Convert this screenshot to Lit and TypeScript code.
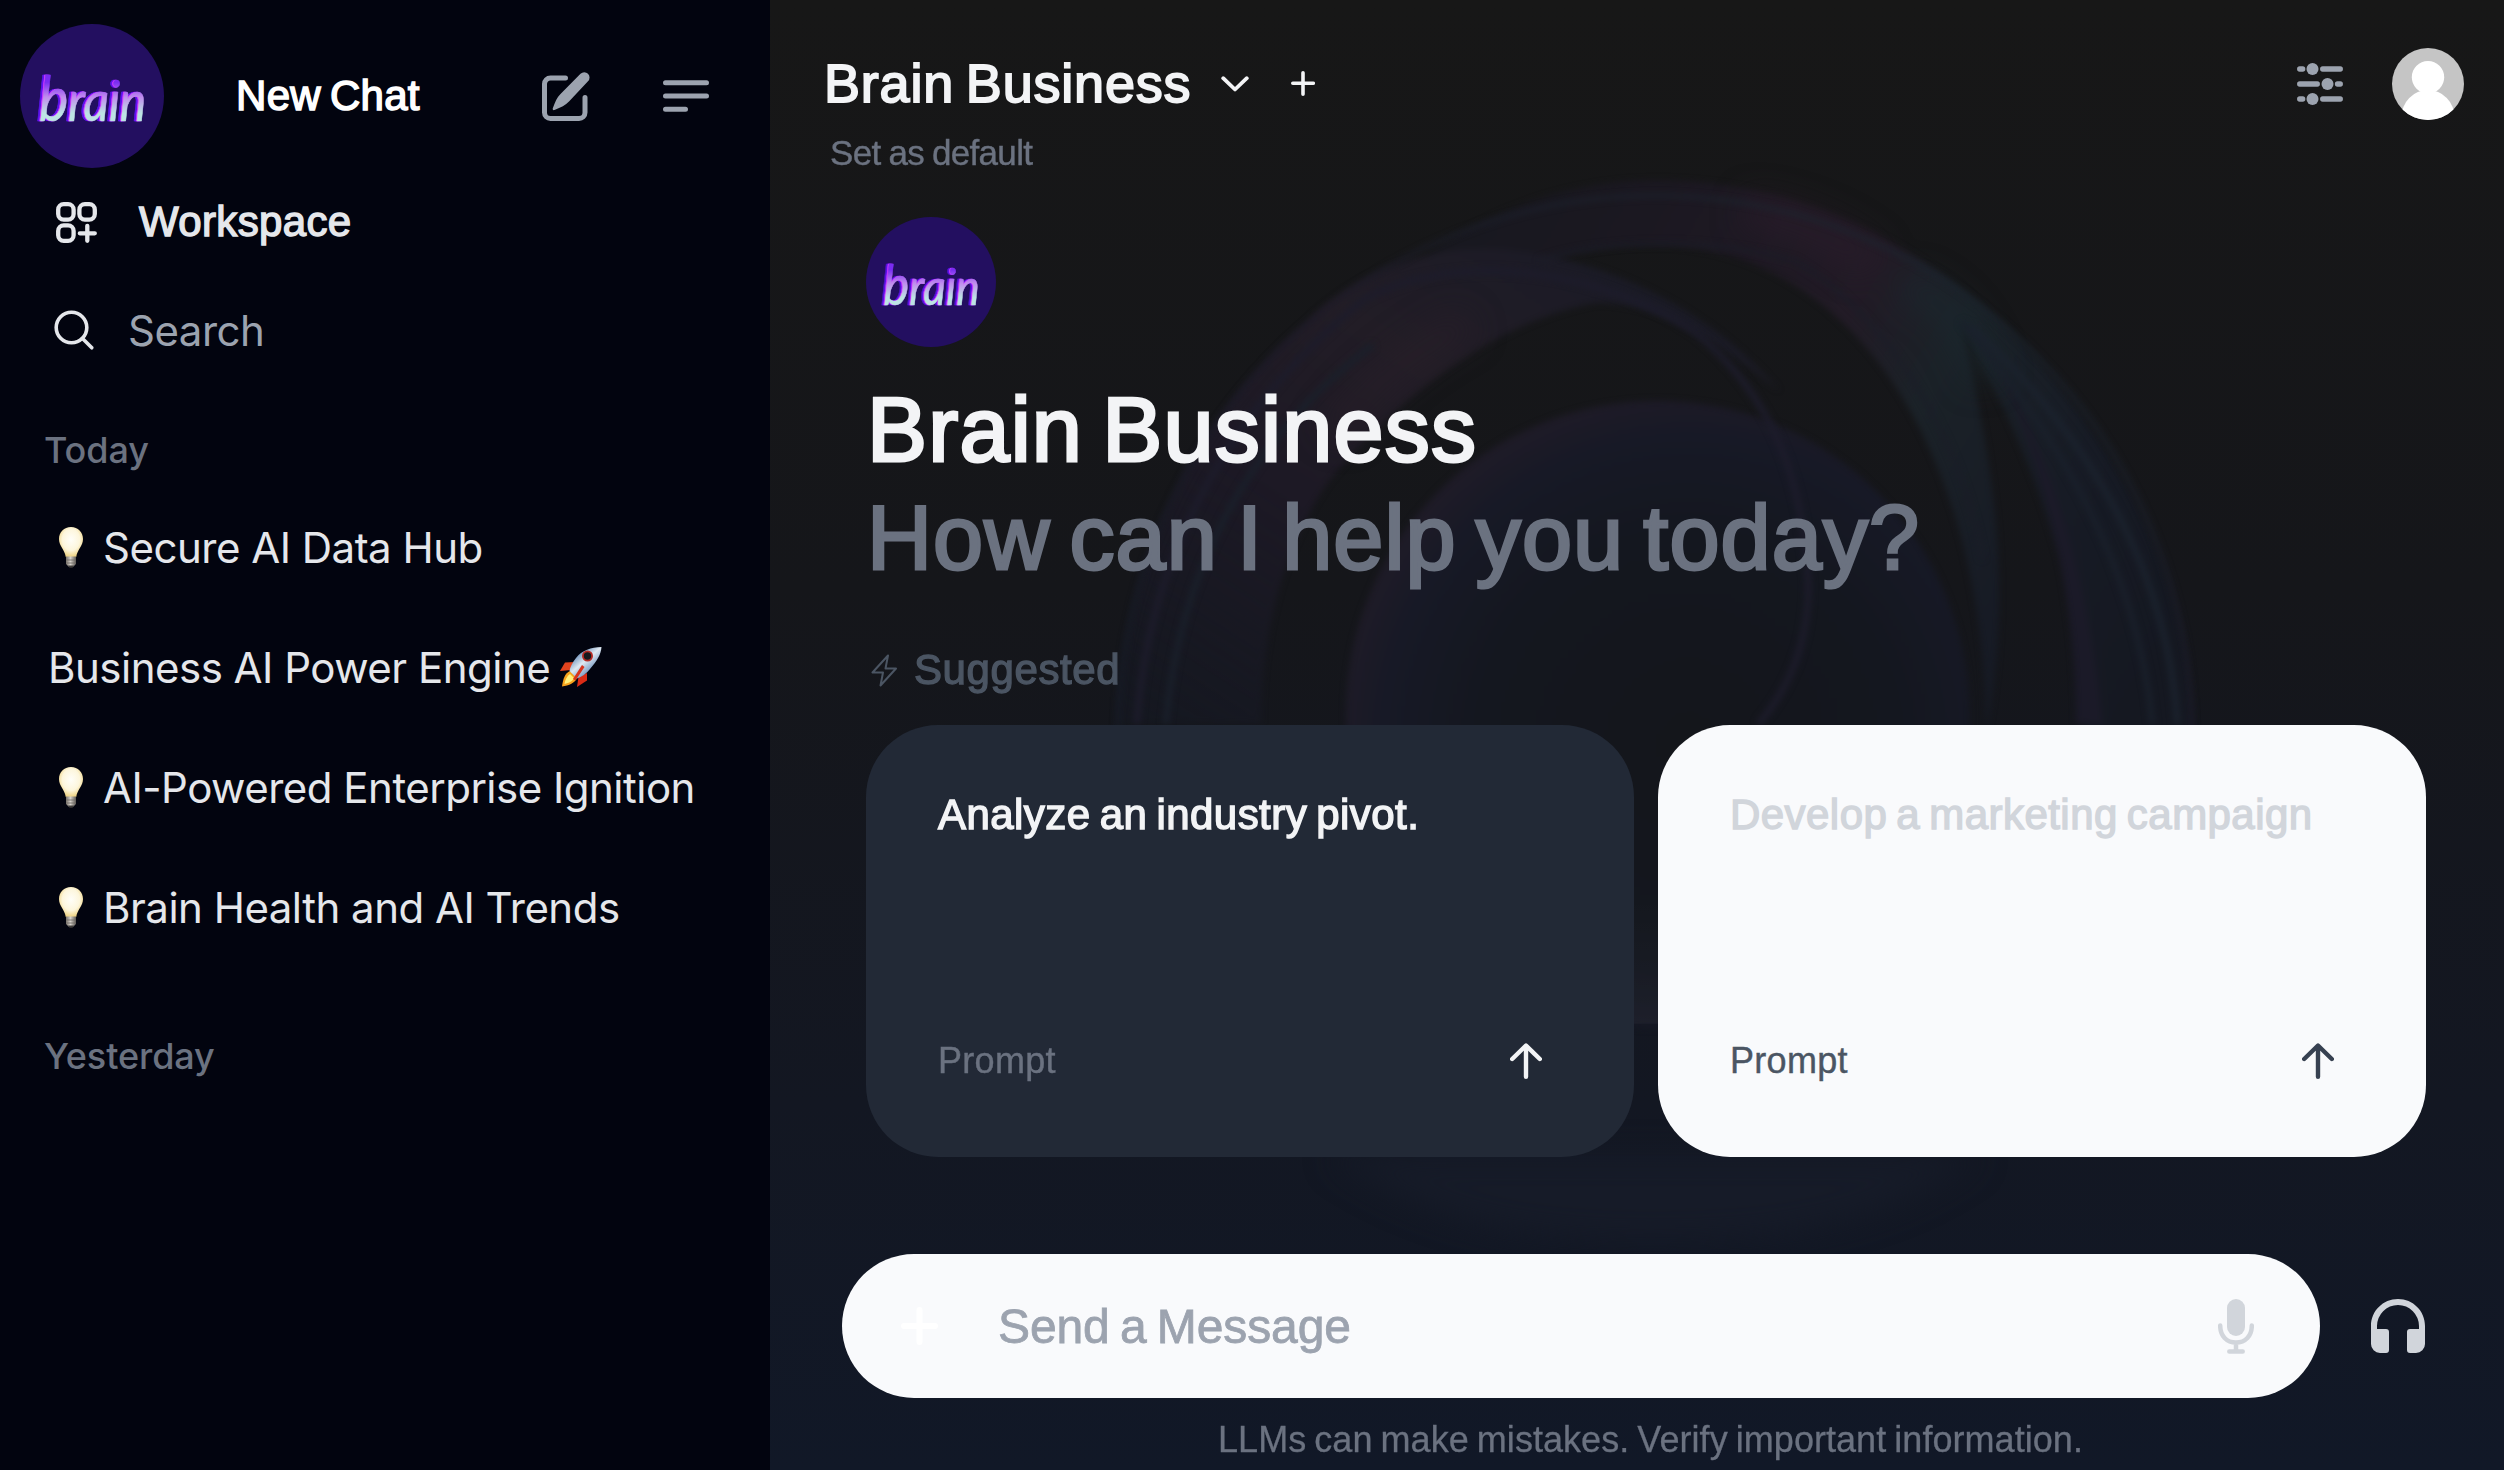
import { LitElement, html, css, svg } from 'lit';
import { customElement, property } from 'lit/decorators.js';

const bulb = html`
  <svg class="bulb" viewBox="0 0 24 41">
    <defs>
      <radialGradient id="glass" cx=".5" cy=".42" r=".6">
        <stop offset="0" stop-color="#fffef8" />
        <stop offset=".6" stop-color="#fdf6dc" />
        <stop offset="1" stop-color="#edcf78" />
      </radialGradient>
      <linearGradient id="screw" x1="0" x2="1">
        <stop offset="0" stop-color="#77716a" />
        <stop offset=".45" stop-color="#d5d1ca" />
        <stop offset="1" stop-color="#5c5853" />
      </linearGradient>
    </defs>
    <path d="M12 0C5 0 0 5.200 0 12c0 7 5.600 10.500 6.800 18h10.400C18.400 22.500 24 19 24 12 24 5.200 19 0 12 0z" fill="url(#glass)" />
    <path d="M7 29.500h10v7.500l-2.500 2.500h-5L7 37z" fill="url(#screw)" />
    <path d="M7.500 33h9M7.500 36h9" stroke="#6c6862" stroke-width=".8" />
    <path d="M9 38.500h6l-1.500 2.200h-3z" fill="#3c3a38" />
  </svg>
`;

const rocket = html`
  <svg class="rocket" viewBox="0 0 42 40">
    <defs>
      <linearGradient id="hull" x1=".2" y1=".2" x2=".8" y2=".9">
        <stop offset="0" stop-color="#5f86b4" />
        <stop offset=".4" stop-color="#dfe9f2" />
        <stop offset="1" stop-color="#3f6ea8" />
      </linearGradient>
    </defs>
    <path d="M15 15L5 15.500 0 24l11-1z" fill="#e2431e" />
    <path d="M27 26v7.500L17 40l1.500-10z" fill="#d92b16" />
    <path d="M10 24C5 26 3 32 2 39.500 9 38.500 15 36 17 31z" fill="#f6a21c" />
    <path d="M10 27c-3 2-5 6-5.500 10C9 36 13 34 14 31z" fill="#fff07a" />
    <path d="M41.500 0C31 0 22 3.500 16 11 12.500 15.500 10 20 9.500 24l7.500 7.500c4.500-1.500 9.500-5 13-9.500C37 14 41 7.500 41.500 0z" fill="url(#hull)" />
    <circle cx="27.500" cy="9" r="4.600" fill="#16181d" stroke="#b52a24" stroke-width="1.800" />
    <path d="M22 18L13 32l2.500 1.500L24.500 20z" fill="#d8341d" />
  </svg>
`;

@customElement('brain-logo')
export class BrainLogo extends LitElement {
  @property({ type: Number }) size = 144;

  static styles = css`
    :host {
      display: block;
      flex: none;
    }

    svg {
      display: block;
    }

    text {
      font: italic 400 56px Lato, sans-serif;
      stroke-linejoin: round;
      filter: drop-shadow(-1px 0 0 #d63bff) drop-shadow(-1.2px 0 0 #5d12ee);
    }

    .initial {
      font-size: 62px;
    }
  `;

  render() {
    return html`
      <svg width=${this.size} height=${this.size} viewBox="0 0 144 144">
        <defs>
          <linearGradient id="neon" x1="0" y1="0" x2="0" y2="1">
            <stop offset=".3" stop-color="#7a2cf2" />
            <stop offset=".5" stop-color="#c08bee" />
            <stop offset=".72" stop-color="#bde4e4" />
          </linearGradient>
        </defs>
        <circle cx="72" cy="72" r="72" fill="#230f60" />
        <text x="19" y="97" textLength="107" lengthAdjust="spacingAndGlyphs" fill="url(#neon)" stroke="url(#neon)" stroke-width=".6"><tspan class="initial">b</tspan>rain</text>
      </svg>
    `;
  }
}

@customElement('chat-sidebar')
export class ChatSidebar extends LitElement {
  static styles = css`
    :host {
      display: block;
      width: 770px;
      flex: none;
      background: #02040f;
      font-family: Inter, sans-serif;
      font-size: 42px;
      letter-spacing: -0.5px;
      color: #e5e7eb;
      white-space: nowrap;
    }

    svg {
      display: block;
      flex: none;
      overflow: visible;
    }

    .top {
      display: flex;
      align-items: center;
      padding: 24px 61px 0 20px;
      height: 144px;
      color: #9ca3af;
    }

    .new {
      flex: 1;
      padding-left: 72px;
      font-family: 'Liberation Sans', sans-serif;
      letter-spacing: 0.3px;
      word-spacing: -3px;
      color: #fff;
      -webkit-text-stroke: 1.5px #fff;
    }

    .menu {
      margin-left: 73px;
    }

    .row {
      display: flex;
      align-items: center;
      height: 108px;
    }

    .workspace {
      padding-left: 56px;
      gap: 42px;
      font-family: 'Liberation Sans', sans-serif;
      letter-spacing: 0.35px;
    }

    .workspace span {
      -webkit-text-stroke: 1.4px currentColor;
    }

    .search {
      padding-left: 54px;
      gap: 34px;
    }

    .search span {
      color: #9ca3af;
    }

    .label {
      padding: 30px 0 1px 44px;
      font-size: 36px;
      font-weight: 500;
      line-height: 72px;
      letter-spacing: -0.1px;
      color: #6b7280;
    }

    .label.later {
      padding-top: 53px;
    }

    .chat {
      display: flex;
      align-items: center;
      height: 120px;
      padding-left: 48px;
    }

    .bulb {
      width: 24px;
      height: 41px;
      margin: 0 20px 0 11px;
    }

    .rocket {
      width: 42px;
      height: 40px;
      margin-left: 10px;
    }
  `;

  render() {
    return html`
      <div class="top">
        <brain-logo></brain-logo>
        <span class="new">New Chat</span>
        <svg width="48" height="49" viewBox="0 0 48 49" fill="none" stroke="currentColor" stroke-width="5" stroke-linecap="round">
          <path d="M23.500 6H8.500A6 6 0 0 0 2.500 12v28.500a6 6 0 0 0 6 6h28.500a6 6 0 0 0 6-6V25.500" />
          <path d="M38.500 1.700a5.300 5.300 0 0 1 7.500 7.500L27 29.500c-3.500 3.500-8 6-14.500 8.500-1.300.5-2.200-.4-1.700-1.700C13 30 15 25.500 18.500 22z" fill="currentColor" stroke="none" />
        </svg>
        <svg class="menu" width="46" height="32" viewBox="0 0 46 32" stroke="currentColor" stroke-width="5" stroke-linecap="round">
          <path d="M2.500 2.700h41M2.500 16h41M2.500 29.300h20" />
        </svg>
      </div>
      <div class="row workspace">
        <svg width="41" height="41" viewBox="0 0 41 41" fill="none" stroke="currentColor" stroke-width="4.300" stroke-linecap="round">
          <rect x="2.200" y="2.200" width="15.400" height="15.400" rx="5.500" />
          <rect x="23.400" y="2.200" width="15.400" height="15.400" rx="5.500" />
          <rect x="2.200" y="23.400" width="15.400" height="15.400" rx="5.500" />
          <path d="M31.300 23.800v15M23.800 31.300h15" />
        </svg>
        <span>Workspace</span>
      </div>
      <div class="row search">
        <svg width="40" height="40" viewBox="0 0 40 40" fill="none" stroke="currentColor" stroke-width="3.600" stroke-linecap="round">
          <circle cx="17.500" cy="17.500" r="15.300" />
          <path d="M28.500 28.500l9.300 9.300" />
        </svg>
        <span>Search</span>
      </div>
      <div class="label">Today</div>
      <div class="chat">${bulb}<span>Secure AI Data Hub</span></div>
      <div class="chat"><span>Business AI Power Engine</span>${rocket}</div>
      <div class="chat">${bulb}<span>AI-Powered Enterprise Ignition</span></div>
      <div class="chat">${bulb}<span>Brain Health and AI Trends</span></div>
      <div class="label later">Yesterday</div>
    `;
  }
}

@customElement('prompt-card')
export class PromptCard extends LitElement {
  @property() heading = '';

  static styles = css`
    :host {
      display: flex;
      flex-direction: column;
      justify-content: space-between;
      box-sizing: border-box;
      width: 768px;
      height: 432px;
      padding: 72px 92px 72px 72px;
      border-radius: 72px;
      background: #222936;
      color: #f3f4f6;
      white-space: nowrap;
    }

    :host([light]) {
      background: #f9fafc;
      color: #d1d5db;
    }

    .heading {
      font-size: 42px;
      line-height: 36px;
      letter-spacing: 0.45px;
      word-spacing: -3px;
      -webkit-text-stroke: 1.4px currentColor;
    }

    .foot {
      display: flex;
      align-items: center;
      justify-content: space-between;
      height: 49px;
      font-size: 36px;
      letter-spacing: 0.3px;
      color: #6b7280;
      -webkit-text-stroke: 0.4px currentColor;
    }

    :host([light]) .foot {
      color: #4b5563;
    }

    svg {
      color: #f3f4f6;
    }

    :host([light]) svg {
      color: #374151;
    }
  `;

  render() {
    return html`
      <div class="heading">${this.heading}</div>
      <div class="foot">
        <span>Prompt</span>
        <svg width="32" height="36" viewBox="0 0 32 36" fill="none" stroke="currentColor" stroke-width="4.400" stroke-linecap="round" stroke-linejoin="round">
          <path d="M16 33.800V3M2.200 16L16 2.500 29.800 16" />
        </svg>
      </div>
    `;
  }
}

// translucent ribbons behind the conversation area
const orb = svg`
  <defs>
    <linearGradient id="rim" x1="0" y1="1" x2="1" y2="0">
      <stop offset=".1" stop-color="#171c29" />
      <stop offset=".5" stop-color="#1e1b2a" />
      <stop offset=".8" stop-color="#1c252f" />
    </linearGradient>
    <linearGradient id="left" x1="0" y1="1" x2=".9" y2="0">
      <stop offset="0" stop-color="#161a26" stop-opacity=".4" />
      <stop offset=".4" stop-color="#1d1925" />
      <stop offset=".65" stop-color="#221d26" />
      <stop offset="1" stop-color="#181a26" />
    </linearGradient>
    <linearGradient id="crown" gradientUnits="userSpaceOnUse" x1="450" y1="250" x2="1400" y2="760">
      <stop offset="0" stop-color="#17181f" />
      <stop offset=".22" stop-color="#1b1821" />
      <stop offset=".48" stop-color="#221b26" />
      <stop offset=".6" stop-color="#1b2228" />
      <stop offset=".8" stop-color="#171b25" />
      <stop offset="1" stop-color="#151821" />
    </linearGradient>
    <radialGradient id="disc" cx=".55" cy=".55" r=".56">
      <stop offset="0" stop-color="#14161b" />
      <stop offset=".6" stop-color="#14171f" />
      <stop offset=".88" stop-color="#171926" />
      <stop offset="1" stop-color="#1e1b27" />
    </radialGradient>
    <linearGradient id="floor" x1="0" y1="0" x2="0" y2="1">
      <stop offset="0" stop-color="#fff" stop-opacity="0" />
      <stop offset="1" stop-color="#fff" stop-opacity=".03" />
    </linearGradient>
    <filter id="soft" x="-10%" y="-10%" width="120%" height="120%" color-interpolation-filters="sRGB"><feGaussianBlur stdDeviation="4" /></filter>
    <filter id="mist" x="-50%" y="-50%" width="200%" height="200%" color-interpolation-filters="sRGB"><feGaussianBlur stdDeviation="20" /></filter>
  </defs>
  <g filter="url(#soft)">
    <path d="M430 290C510 180 650 105 790 105c190 0 360 100 480 260 110 145 165 300 170 460h-130c-10-200-60-350-150-530 20 110 70 300 30 530-5-380-170-635-400-635-60 0-110 10-150 30C580 195 500 220 430 290z" fill="url(#crown)" />
    <path d="M140 815C150 610 230 420 370 290c70-75 170-110 270-90 120 20 230 90 300 180-70-60-140-115-220-115C590 290 470 400 395 500c-50 80-80 190-80 315z" fill="url(#left)" />
    <path d="M1205 350c70 130 110 290 125 465h-32c0-150-30-310-93-465z" fill="#1b1a28" />
  </g>
  <g filter="url(#mist)">
    <path d="M400 440c50-75 110-120 165-150" fill="none" stroke="#2a1f2a" stroke-width="40" opacity=".5" />
    <path d="M900 145c60 10 110 32 150 70" fill="none" stroke="#2c1d2c" stroke-width="44" opacity=".6" />
    <path d="M1090 240c50 20 80 60 100 130" fill="none" stroke="#1b2a30" stroke-width="36" opacity=".6" />
    <path d="M400 1380C520 1470 640 1490 790 1490s280-20 390-110z" fill="#161b28" />
  </g>
  <ellipse cx="793" cy="803" rx="376" ry="410" fill="url(#disc)" filter="url(#soft)" />
  <g fill="none" stroke-width="4" filter="url(#soft)">
    <path d="M142 830A648 705 0 0 1 1438 830" stroke="url(#rim)" />
    <path d="M165 815C180 580 290 390 440 260c120-70 300-30 400 45 90 80 130 190 135 330 0 70-20 130-60 180" stroke="#1d1c2b" stroke-width="8" />
    <path d="M200 815C215 630 290 450 450 320M1160 290c100 130 210 300 230 525" stroke="#1a202b" stroke-width="7" />
    <path d="M1420 815c-10-180-90-360-250-520" stroke="#1b222d" stroke-width="8" />
    <path d="M650 210C730 180 860 180 960 210c120 80 200 240 225 390" stroke="#1b1d28" />
  </g>
  <rect x="420" y="1040" width="745" height="167" fill="url(#floor)" />
`;

@customElement('app-root')
export class AppRoot extends LitElement {
  static styles = css`
    :host {
      display: flex;
      width: 2504px;
      height: 1470px;
      overflow: hidden;
      font-family: 'Liberation Sans', Arial, sans-serif;
    }

    main {
      position: relative;
      flex: 1;
      background: linear-gradient(#171717, #15161a 40%, #131722 75%, #111827);
      white-space: nowrap;
    }

    svg {
      display: block;
      flex: none;
    }

    .orb {
      position: absolute;
      top: 100px;
      left: 230px;
      width: 1300px;
      height: 1200px;
      overflow: visible;
    }

    .page {
      position: relative;
    }

    header {
      display: flex;
      align-items: center;
      height: 72px;
      padding: 48px 40px 0 54px;
      color: #f3f4f6;
    }

    .model {
      width: 379px;
      padding-bottom: 2px;
      font-size: 54px;
      letter-spacing: 0.8px;
      word-spacing: -4px;
      -webkit-text-stroke: 1.8px #f3f4f6;
    }

    .chevron {
      margin-left: 18px;
    }

    .add {
      margin-left: 42px;
    }

    .sliders {
      margin-left: auto;
      margin-right: 49px;
      color: #9ca3af;
    }

    .default {
      padding-left: 60px;
      font-size: 35px;
      line-height: 66px;
      letter-spacing: -0.7px;
      word-spacing: -1px;
      color: #6b7280;
      -webkit-text-stroke: 0.4px currentColor;
    }

    .intro {
      padding: 31px 0 0 96px;
    }

    h1 {
      margin: 29px 0 0 1px;
      font-size: 90px;
      font-weight: 400;
      line-height: 108px;
      letter-spacing: 1.2px;
      word-spacing: -7px;
      color: #f3f4f6;
      -webkit-text-stroke: 3px currentColor;
    }

    h1 small {
      display: block;
      font-size: inherit;
      letter-spacing: 1.1px;
      color: #6b7280;
    }

    .suggested {
      display: flex;
      align-items: center;
      gap: 17px;
      height: 60px;
      margin: 48px 0 25px 5px;
      font-size: 42px;
      letter-spacing: 0.6px;
      color: #4b5563;
    }

    .suggested span {
      -webkit-text-stroke: 1.3px currentColor;
    }

    .cards {
      display: flex;
      gap: 24px;
    }

    .composer {
      display: flex;
      align-items: center;
      margin: 97px 0 0 72px;
      color: #d1d5db;
    }

    .field {
      display: flex;
      align-items: center;
      box-sizing: border-box;
      width: 1478px;
      height: 144px;
      padding: 0 66px 0 59px;
      border-radius: 72px;
      background: #f9fafc;
    }

    .placeholder {
      flex: 1;
      padding-left: 60px;
      font-size: 48px;
      letter-spacing: -0.1px;
      word-spacing: -3px;
      color: #9ca3af;
      -webkit-text-stroke: 0.8px currentColor;
    }

    .phones {
      margin-left: 51px;
    }

    .note {
      padding-left: 27px;
      text-align: center;
      font-size: 36px;
      line-height: 84px;
      letter-spacing: 0.05px;
      word-spacing: -2px;
      color: #6b7280;
      -webkit-text-stroke: 0.3px currentColor;
    }
  `;

  render() {
    return html`
      <chat-sidebar></chat-sidebar>
      <main>
        <svg class="orb" viewBox="0 0 1568 1568" preserveAspectRatio="none">${orb}</svg>
        <div class="page">
          <header>
            <span class="model">Brain Business</span>
            <svg class="chevron" width="28" height="16" viewBox="0 0 28 16" fill="none" stroke="currentColor" stroke-width="3.800" stroke-linecap="round" stroke-linejoin="round">
              <path d="M2.200 2.200L14 13.500 25.800 2.200" />
            </svg>
            <svg class="add" width="24" height="26" viewBox="0 0 24 26" stroke="currentColor" stroke-width="3.600" stroke-linecap="round">
              <path d="M12 1.800v21.500M1.800 12.300h20.500" />
            </svg>
            <svg class="sliders" width="46" height="42" viewBox="0 0 46 42" stroke="currentColor" stroke-width="5.300" stroke-linecap="round">
              <path d="M2.700 6h3M25.700 6h17.600M2.700 21h17.600M40.500 21h2.800M2.700 36h3M25.700 36h17.600" />
              <g fill="currentColor" stroke="none">
                <circle cx="15.500" cy="6" r="6" />
                <circle cx="30.500" cy="21" r="6" />
                <circle cx="15.500" cy="36" r="6" />
              </g>
            </svg>
            <svg width="72" height="72" viewBox="0 0 72 72" fill="#fff">
              <clipPath id="round"><circle cx="36" cy="36" r="36" /></clipPath>
              <g clip-path="url(#round)">
                <rect width="72" height="72" fill="#c5c5c5" />
                <circle cx="36" cy="29.200" r="16.200" />
                <ellipse cx="36" cy="69" rx="26.500" ry="27" />
              </g>
            </svg>
          </header>
          <div class="default">Set as default</div>
          <section class="intro">
            <brain-logo size="130"></brain-logo>
            <h1>Brain Business<small>How can I help you today?</small></h1>
            <div class="suggested">
              <svg width="26" height="33" viewBox="0 0 26 33" fill="none" stroke="currentColor" stroke-width="2" stroke-linejoin="round">
                <path d="M17 1.500L1.500 18.500H12L9.500 31.500 25 14.500H14.500z" />
              </svg>
              <span>Suggested</span>
            </div>
            <div class="cards">
              <prompt-card heading="Analyze an industry pivot."></prompt-card>
              <prompt-card light heading="Develop a marketing campaign"></prompt-card>
            </div>
          </section>
          <div class="composer">
            <div class="field">
              <svg width="37" height="38" viewBox="0 0 37 38" stroke="#fff" stroke-width="6" stroke-linecap="round">
                <path d="M18.500 3v32M3 19h31" />
              </svg>
              <span class="placeholder">Send a Message</span>
              <svg width="36" height="55" viewBox="0 0 36 55" fill="none" stroke="currentColor" stroke-width="4.500" stroke-linecap="round">
                <rect x="9" y="0" width="18" height="37" rx="9" fill="currentColor" stroke="none" />
                <path d="M2.200 26.500c0 10.500 6.500 17 15.800 17s15.800-6.500 15.800-17M18 44v8M11.300 52.500h13.400" />
              </svg>
            </div>
            <svg class="phones" width="54" height="54" viewBox="0 0 54 54" fill="currentColor">
              <path d="M27 0C12 0 0 12 0 27v18a9 9 0 0 0 9 9h6a3 3 0 0 0 3-3V33a3 3 0 0 0-3-3H6v-3a21 21 0 0 1 42 0v3h-9a3 3 0 0 0-3 3v18a3 3 0 0 0 3 3h6a9 9 0 0 0 9-9V27C54 12 42 0 27 0z" />
            </svg>
          </div>
          <div class="note">LLMs can make mistakes. Verify important information.</div>
        </div>
      </main>
    `;
  }
}

declare global {
  interface HTMLElementTagNameMap {
    'app-root': AppRoot;
    'brain-logo': BrainLogo;
    'chat-sidebar': ChatSidebar;
    'prompt-card': PromptCard;
  }
}
